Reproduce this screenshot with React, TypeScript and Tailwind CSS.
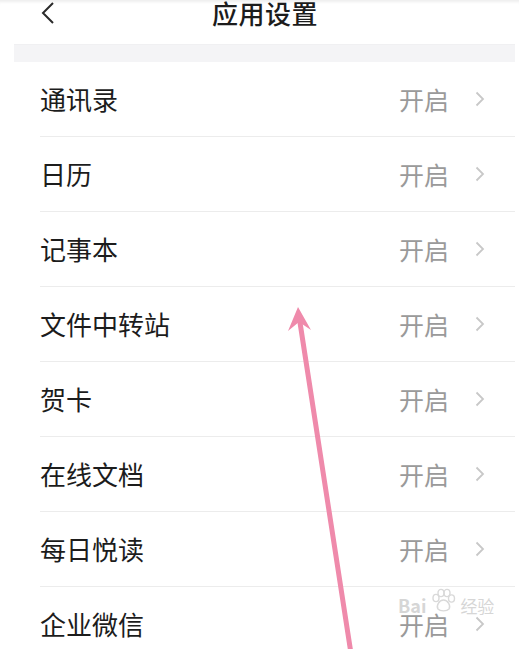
import React from 'react';

const items = ['通讯录', '日历', '记事本', '文件中转站', '贺卡', '在线文档', '每日悦读', '企业微信'];

const Chevron: React.FC = () => (
  <svg width="12" height="18" viewBox="0 0 12 18" className="ml-[25px]">
    <path d="M2.5 2.5 L9 9 L2.5 15.5" fill="none" stroke="#c8c8c8" strokeWidth="1.8" />
  </svg>
);

const Paw: React.FC = () => (
  <svg width="26" height="26" viewBox="0 0 26 26" className="mx-[4px] -mt-[8px]">
    <g fill="none" stroke="#d9d9d9" strokeWidth="1.4">
      <ellipse cx="6" cy="10" rx="3" ry="3.6" />
      <ellipse cx="11" cy="5" rx="3" ry="3.6" />
      <ellipse cx="17" cy="5" rx="3" ry="3.6" />
      <ellipse cx="21.5" cy="10.5" rx="3" ry="3.6" />
      <path d="M13.5 12 C9 12 6 18 8 21 C10 23.5 17 23.5 19 21 C21 18 18 12 13.5 12 Z" />
    </g>
  </svg>
);

const App: React.FC = () => {
  return (
    <div
      className="relative w-[519px] h-[649px] overflow-hidden bg-white text-[#1c1c1c]"
      style={{ fontFamily: '"Noto Sans CJK SC", "Noto Sans", sans-serif' }}
    >
      {/* header */}
      <div className="h-[44px] flex items-start shadow-[inset_0_4px_3px_-2px_rgba(0,0,0,0.07)]">
        <svg width="16" height="22" viewBox="0 0 16 22" className="ml-[40px] mt-[2px]">
          <path d="M13 1 L3 11 L13 21" fill="none" stroke="#2a2a2a" strokeWidth="2" />
        </svg>
        <div className="ml-[156px] text-[26px] leading-[26px] font-medium tracking-[0.5px]">应用设置</div>
      </div>

      {/* grey band */}
      <div className="ml-[14px] mr-[4px] h-[18px] bg-[#f4f4f6] border-t border-[#f0f0f2]" />

      {/* list */}
      <div className="ml-[40px] mr-[4px]">
        {items.map((name) => (
          <div key={name} className="h-[75px] flex items-center border-b border-[#ececec]">
            <span className="flex-1 text-[26px] leading-none -mt-[1px]">{name}</span>
            <span className="text-[25px] leading-none text-[#9a9a9a]">开启</span>
            <span className="mr-[29px]">
              <Chevron />
            </span>
          </div>
        ))}
      </div>

      {/* watermark */}
      <div className="absolute left-[398px] top-[596px] flex items-end text-[#d6d6d6] pointer-events-none">
        <span className="text-[18px] leading-none font-bold">Bai</span>
        <Paw />
        <span className="text-[17px] leading-none">经验</span>
      </div>

      {/* annotation arrow */}
      <svg className="absolute left-0 top-0 pointer-events-none" width="519" height="649" viewBox="0 0 519 649">
        <line x1="352" y1="660" x2="299" y2="316" stroke="#ef8aab" strokeWidth="5" strokeLinecap="round" />
        <path d="M298 307 L288 331 L299 322 L311 330 Z" fill="#ef8aab" />
      </svg>
    </div>
  );
};

export default App;
